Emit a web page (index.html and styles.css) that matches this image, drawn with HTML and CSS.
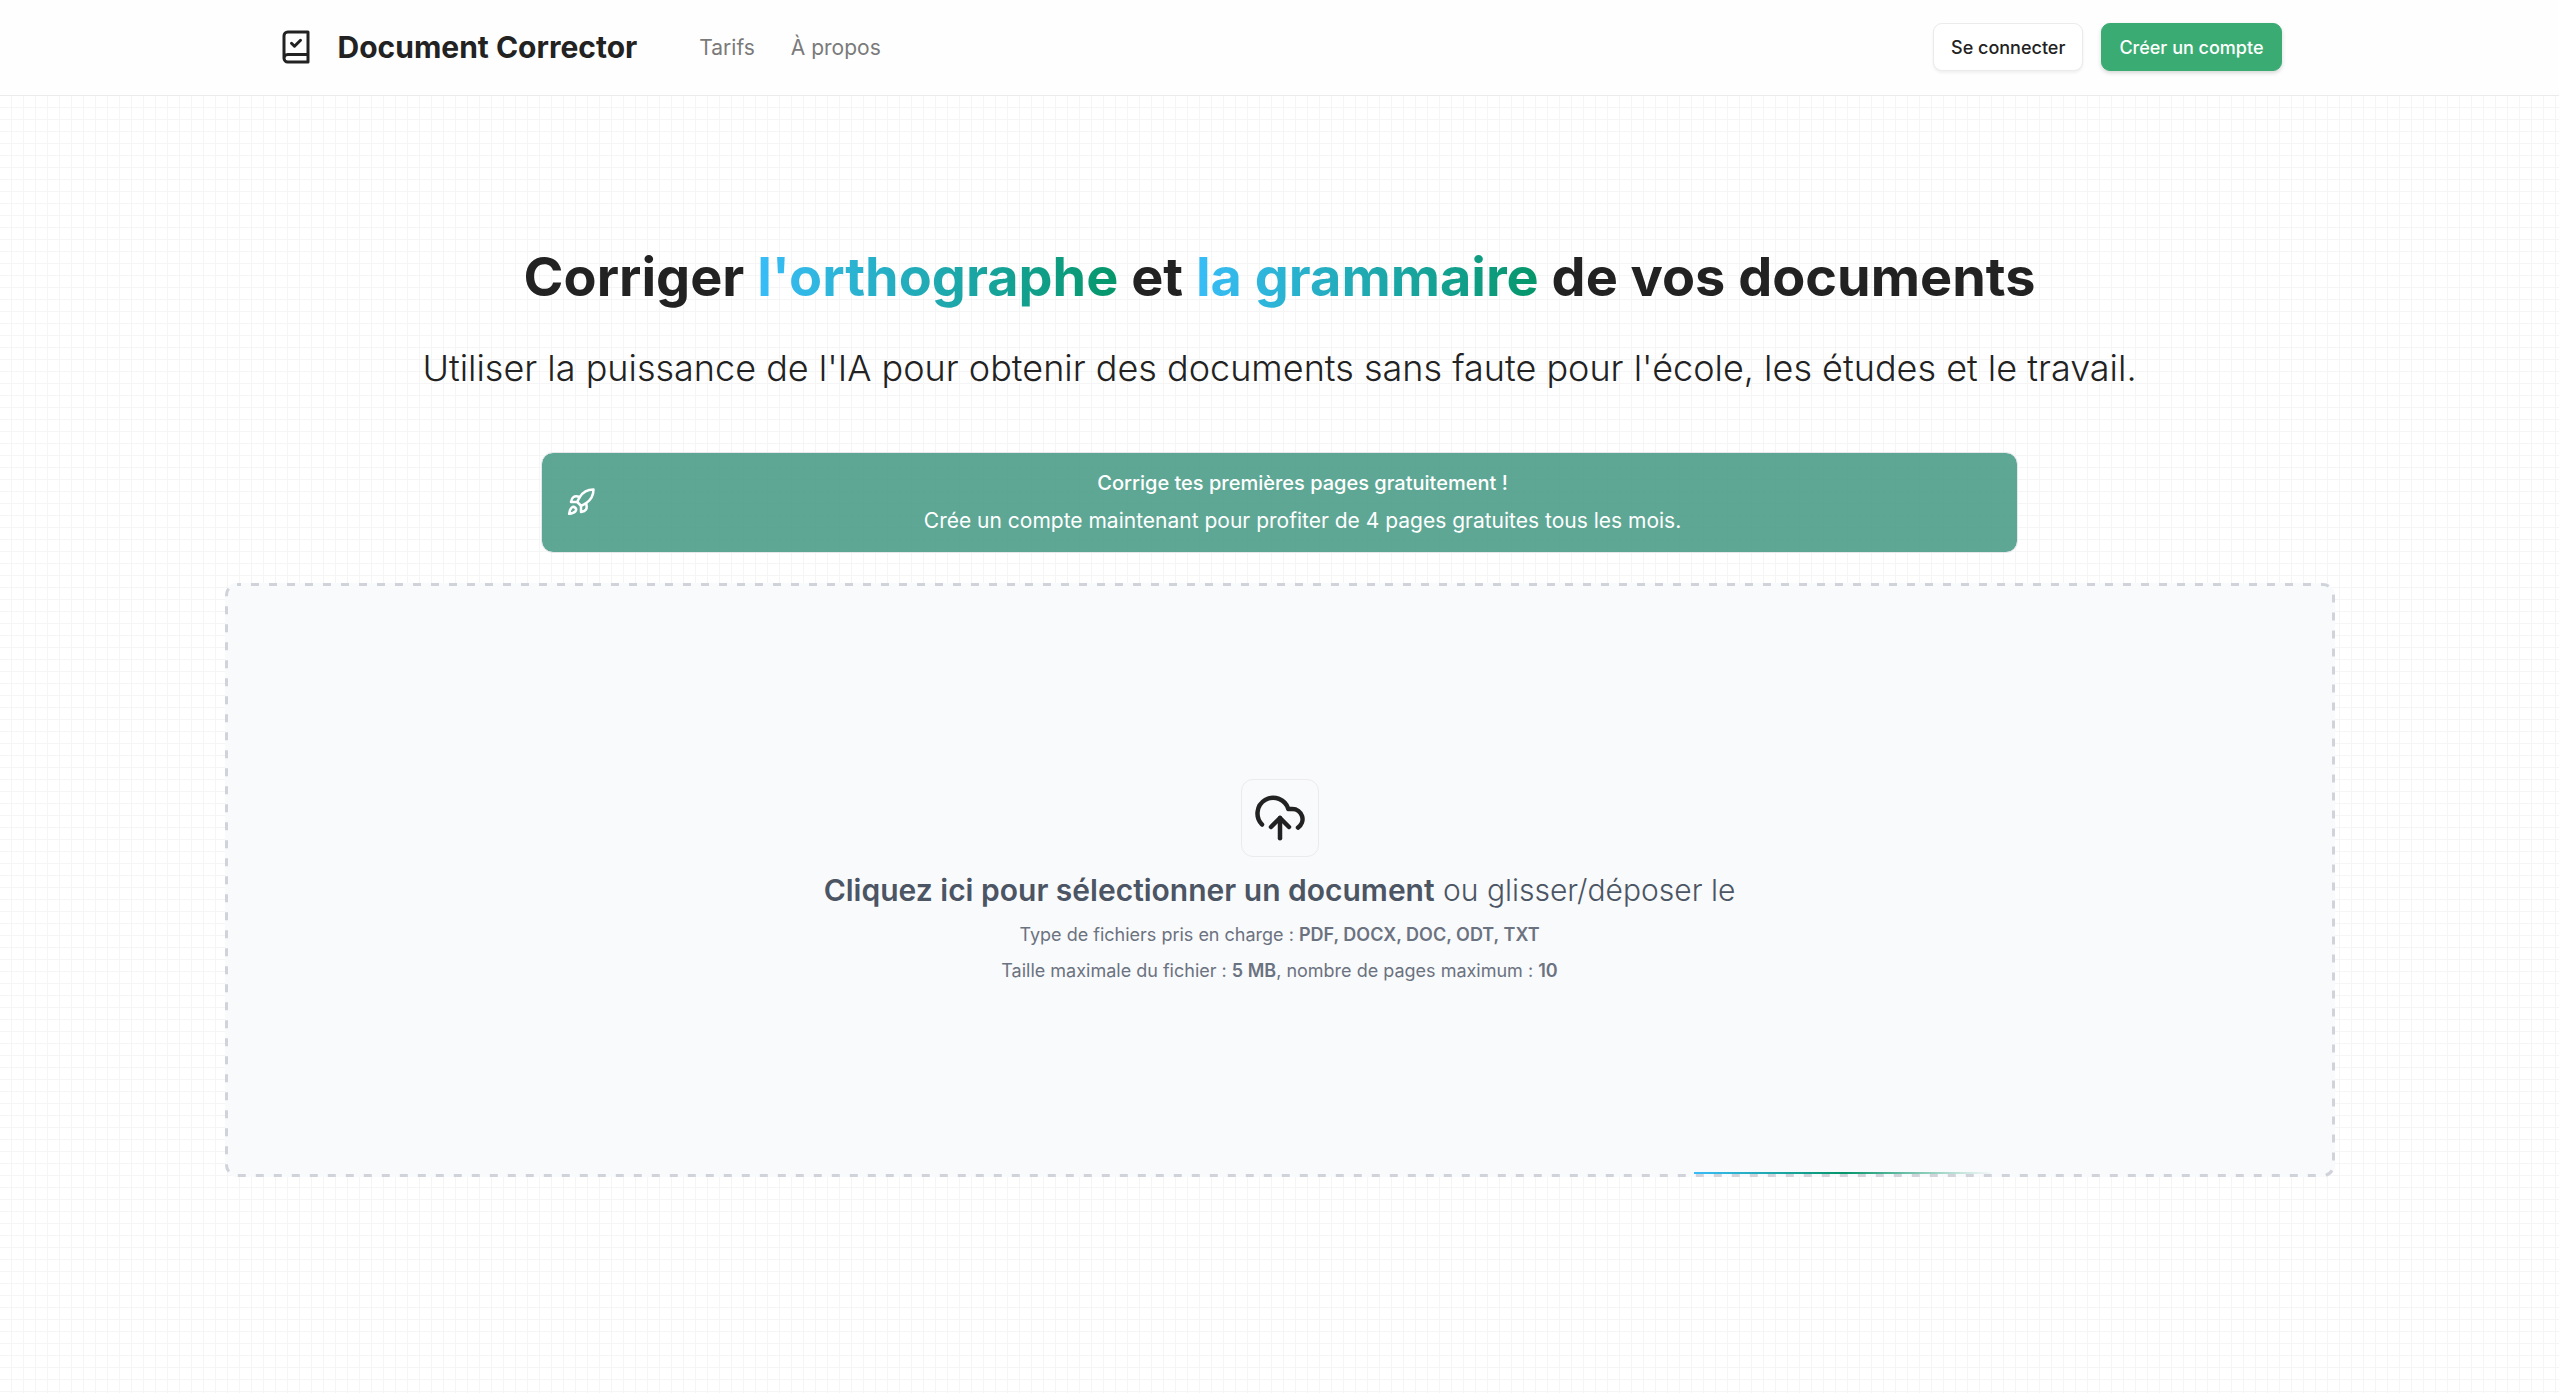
FILE: index.html
```html
<!DOCTYPE html>
<html lang="fr">
<head>
<meta charset="utf-8">
<title>Document Corrector</title>
<link rel="stylesheet" href="styles.css">
</head>
<body>
<header class="header">
  <div class="container">
    <a class="brand" href="#">
      <svg class="icon brand-icon" viewBox="0 0 24 24" aria-hidden="true"><path d="M4 19.500v-15A2.500 2.500 0 0 1 6.500 2H20v20H6.500a2.500 2.500 0 0 1 0-5H20"/><path d="m9 9.500 2 2 4-4"/></svg>
      <span>Document Corrector</span>
    </a>
    <nav class="nav">
      <a href="#">Tarifs</a>
      <a href="#">À propos</a>
    </nav>
    <div class="actions">
      <button class="button" type="button">Se connecter</button>
      <button class="button primary" type="button">Créer un compte</button>
    </div>
  </div>
</header>
<main class="main">
  <h1 class="title">Corriger <span class="gradient">l'orthographe</span> et <span class="gradient">la grammaire</span> de vos documents</h1>
  <p class="subtitle">Utiliser la puissance de l'IA pour obtenir des documents sans faute pour l'école, les études et le travail.</p>
  <section class="banner">
    <svg class="icon banner-icon" viewBox="0 0 24 24" aria-hidden="true"><path d="M4.500 16.500c-1.500 1.260-2 5-2 5s3.740-.5 5-2c.71-.84.7-2.130-.09-2.910a2.180 2.180 0 0 0-2.910-.09z"/><path d="m12 15-3-3a22 22 0 0 1 2-3.950A12.880 12.880 0 0 1 22 2c0 2.720-.78 7.500-6 11a22.350 22.350 0 0 1-4 2z"/><path d="M9 12H4s.55-3.030 2-4c1.620-1.080 5 0 5 0"/><path d="M12 15v5s3.030-.55 4-2c1.080-1.620 0-5 0-5"/></svg>
    <div class="banner-text">
      <h2>Corrige tes premières pages gratuitement !</h2>
      <p>Crée un compte maintenant pour profiter de 4 pages gratuites tous les mois.</p>
    </div>
  </section>
  <button class="dropzone" type="button">
    <svg class="outline" aria-hidden="true"><rect x="1.500" y="1.500" rx="10.500"/></svg>
    <span class="upload"><svg class="icon upload-icon" viewBox="0 0 24 24" aria-hidden="true"><path d="M4 14.899A7 7 0 1 1 15.710 8h1.790a4.500 4.500 0 0 1 2.500 8.242"/><path d="M12 12v9"/><path d="m16 16-4-4-4 4"/></svg></span>
    <span class="prompt"><b>Cliquez ici pour sélectionner un document</b> ou glisser/déposer le</span>
    <span class="hint">Type de fichiers pris en charge : <b>PDF, DOCX, DOC, ODT, TXT</b></span>
    <span class="hint">Taille maximale du fichier : <b>5 MB</b>, nombre de pages maximum : <b>10</b></span>
    <span class="beam"></span>
  </button>
</main>
</body>
</html>
```
FILE: styles.css
```css
* {
  box-sizing: border-box;
  margin: 0;
}

body {
  min-height: 100vh;
  font-family: Inter, "Liberation Sans", sans-serif;
  color: #222;
  background-color: #fff;
  background-image:
    linear-gradient(to right, transparent 11px, #f5f5f5 11px),
    linear-gradient(to bottom, transparent 11px, #f5f5f5 11px);
  background-size: 12px 12px;
}

a {
  color: inherit;
  text-decoration: none;
}

.icon {
  fill: none;
  stroke: currentColor;
  stroke-width: 2;
  stroke-linecap: round;
  stroke-linejoin: round;
  flex: none;
}

.header {
  background: #fefefe;
  border-bottom: 1px solid #ebebeb;
}

.container {
  display: flex;
  align-items: center;
  max-width: 2100px;
  height: 95px;
  margin: 0 auto;
  padding: 0 48px 1px;
}

.brand {
  display: flex;
  align-items: center;
  gap: 24px;
  font-size: 30px;
  font-weight: 700;
}

.brand-icon {
  width: 36px;
  height: 36px;
}

.nav {
  display: flex;
  gap: 36px;
  margin-left: 62px;
  font-size: 21px;
  color: #7a7a7a;
}

.actions {
  display: flex;
  gap: 18px;
  margin-left: auto;
}

.button {
  height: 48px;
  padding: 0 17px;
  border: 1px solid #ebebeb;
  border-radius: 9px;
  background: #fff;
  color: #222;
  font: 500 18px Inter, "Liberation Sans", sans-serif;
  box-shadow: 0 2px 3px rgb(0 0 0 / 6%);
}

.primary {
  border-color: #3aac73;
  background: #3aac73;
  color: #fff;
  box-shadow: 0 2px 4px rgb(0 0 0 / 16%);
}

.main {
  display: flex;
  flex-direction: column;
  align-items: center;
  max-width: 2110px;
  margin: 0 auto;
  padding-top: 144px;
  text-align: center;
}

.title {
  font-size: 54px;
  line-height: 74px;
  font-weight: 700;
}

.gradient {
  background: linear-gradient(to right, #38bdf8, #059669);
  background-clip: text;
  color: transparent;
}

.subtitle {
  margin-top: 27px;
  font-size: 36px;
  line-height: 54px;
  font-weight: 300;
}

.banner {
  display: flex;
  align-items: center;
  gap: 16px;
  width: 70%;
  height: 101px;
  margin-top: 57px;
  padding: 0 24px 1px;
  border: 1px solid #e5e7eb;
  border-radius: 12px;
  background: rgb(70 154 133 / 87%);
  background-clip: padding-box;
  color: #fff;
}

.banner-icon {
  width: 30px;
  height: 30px;
}

.banner-text {
  flex: 1;
}

.banner-text h2 {
  margin-bottom: 2px;
  font-size: 20px;
  line-height: 36px;
  font-weight: 500;
}

.banner-text p {
  font-size: 21px;
  line-height: 36px;
}

.dropzone {
  position: relative;
  display: flex;
  flex-direction: column;
  align-items: center;
  justify-content: center;
  width: 100%;
  height: 594px;
  margin-top: 30px;
  padding: 8px 0 0;
  border: 0;
  border-radius: 12px;
  background: #f9fafc;
  color: #4b5563;
  font-family: inherit;
}

.outline {
  position: absolute;
  inset: 0;
  width: 100%;
  height: 100%;
}

.outline rect {
  width: calc(100% - 3px);
  height: calc(100% - 3px);
  fill: none;
  stroke: #d1d3db;
  stroke-width: 3px;
  stroke-dasharray: 8 10;
  stroke-dashoffset: 4px;
}

.upload {
  display: flex;
  align-items: center;
  justify-content: center;
  width: 78px;
  height: 78px;
  border: 1px solid #ebebeb;
  border-radius: 12px;
  color: #222;
}

.upload-icon {
  width: 54px;
  height: 54px;
}

.prompt {
  margin: 12px 0 6px;
  font-size: 30px;
  line-height: 42px;
  font-weight: 300;
}

.prompt b {
  font-weight: 600;
}

.hint {
  font-size: 18px;
  line-height: 36px;
  color: #6b7280;
}

.hint b {
  font-weight: 600;
}

.beam {
  position: absolute;
  right: 341px;
  bottom: 3px;
  width: 300px;
  height: 2px;
  background: linear-gradient(to right, #38bdf8, #059669 50%, transparent);
}
```
